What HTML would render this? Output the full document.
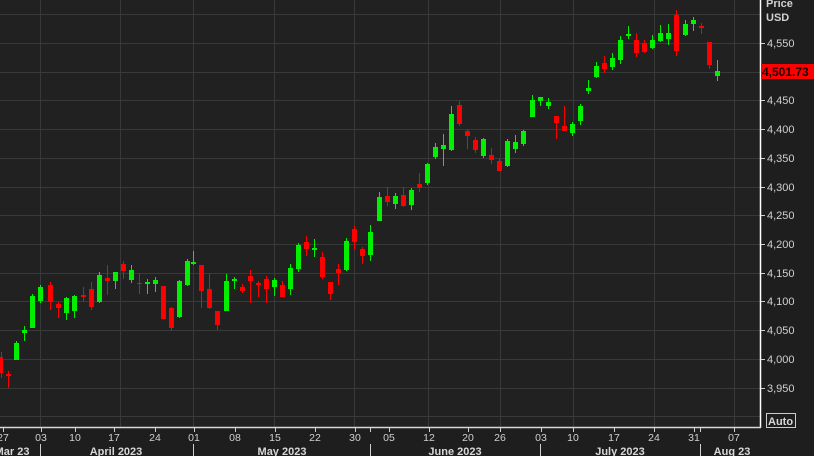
<!DOCTYPE html>
<html><head><meta charset="utf-8"><style>
html,body{margin:0;padding:0;background:#1e1e1f;}
svg{display:block}
text{font-family:"Liberation Sans",sans-serif;}
</style></head><body>
<svg width="814" height="456" viewBox="0 0 814 456" xmlns="http://www.w3.org/2000/svg">
<rect width="814" height="456" fill="#1e1e1f"/>
<rect x="0" y="0" width="760" height="427" fill="#202120"/>
<g stroke="#383a39" stroke-width="1">
<line x1="0" y1="14.5" x2="760" y2="14.5"/><line x1="0" y1="43.5" x2="760" y2="43.5"/><line x1="0" y1="72.5" x2="760" y2="72.5"/><line x1="0" y1="100.5" x2="760" y2="100.5"/><line x1="0" y1="129.5" x2="760" y2="129.5"/><line x1="0" y1="158.5" x2="760" y2="158.5"/><line x1="0" y1="187.5" x2="760" y2="187.5"/><line x1="0" y1="215.5" x2="760" y2="215.5"/><line x1="0" y1="244.5" x2="760" y2="244.5"/><line x1="0" y1="273.5" x2="760" y2="273.5"/><line x1="0" y1="301.5" x2="760" y2="301.5"/><line x1="0" y1="330.5" x2="760" y2="330.5"/><line x1="0" y1="359.5" x2="760" y2="359.5"/><line x1="0" y1="388.5" x2="760" y2="388.5"/><line x1="0" y1="416.5" x2="760" y2="416.5"/>
<line x1="40.5" y1="0" x2="40.5" y2="427"/><line x1="120.5" y1="0" x2="120.5" y2="427"/><line x1="193.5" y1="0" x2="193.5" y2="427"/><line x1="274.5" y1="0" x2="274.5" y2="427"/><line x1="354.5" y1="0" x2="354.5" y2="427"/><line x1="428.5" y1="0" x2="428.5" y2="427"/><line x1="500.5" y1="0" x2="500.5" y2="427"/><line x1="573.5" y1="0" x2="573.5" y2="427"/><line x1="654.5" y1="0" x2="654.5" y2="427"/><line x1="734.5" y1="0" x2="734.5" y2="427"/>
</g>
<g stroke-width="1">
<g fill="#ff0000" stroke="#ff0000">
<line x1="1.5" y1="352" x2="1.5" y2="378"/><rect x="-1" y="357" width="4" height="16" stroke="none"/>
<line x1="8.5" y1="371" x2="8.5" y2="388"/><rect x="6" y="374" width="5" height="2" stroke="none"/>
<line x1="50.5" y1="282" x2="50.5" y2="310"/><rect x="48" y="285" width="5" height="17" stroke="none"/>
<line x1="58.5" y1="302" x2="58.5" y2="318"/><rect x="56" y="304" width="5" height="4" stroke="none"/>
<line x1="83.5" y1="287" x2="83.5" y2="302"/><rect x="81" y="295" width="5" height="2" stroke="none"/>
<line x1="91.5" y1="282" x2="91.5" y2="310"/><rect x="89" y="289" width="5" height="18" stroke="none"/>
<line x1="107.5" y1="265" x2="107.5" y2="295"/><rect x="105" y="278" width="5" height="3" stroke="none"/>
<line x1="123.5" y1="261" x2="123.5" y2="279"/><rect x="121" y="264" width="5" height="7" stroke="none"/>
<line x1="139.5" y1="273" x2="139.5" y2="294"/><rect x="137" y="283" width="5" height="1" stroke="none"/>
<line x1="163.5" y1="286" x2="163.5" y2="319"/><rect x="161" y="286" width="5" height="33" stroke="none"/>
<line x1="171.5" y1="307" x2="171.5" y2="331"/><rect x="169" y="308" width="5" height="20" stroke="none"/>
<line x1="201.5" y1="265" x2="201.5" y2="308"/><rect x="199" y="265" width="5" height="26" stroke="none"/>
<line x1="209.5" y1="273" x2="209.5" y2="309"/><rect x="207" y="289" width="5" height="19" stroke="none"/>
<line x1="217.5" y1="311" x2="217.5" y2="330"/><rect x="215" y="311" width="5" height="14" stroke="none"/>
<line x1="242.5" y1="284" x2="242.5" y2="293"/><rect x="240" y="287" width="5" height="4" stroke="none"/>
<line x1="250.5" y1="270" x2="250.5" y2="303"/><rect x="248" y="276" width="5" height="5" stroke="none"/>
<line x1="258.5" y1="281" x2="258.5" y2="297"/><rect x="256" y="283" width="5" height="2" stroke="none"/>
<line x1="266.5" y1="276" x2="266.5" y2="303"/><rect x="264" y="279" width="5" height="10" stroke="none"/>
<line x1="282.5" y1="281" x2="282.5" y2="297"/><rect x="280" y="285" width="5" height="12" stroke="none"/>
<line x1="306.5" y1="236" x2="306.5" y2="256"/><rect x="304" y="242" width="5" height="7" stroke="none"/>
<line x1="322.5" y1="252" x2="322.5" y2="279"/><rect x="320" y="257" width="5" height="20" stroke="none"/>
<line x1="330.5" y1="282" x2="330.5" y2="300"/><rect x="328" y="282" width="5" height="12" stroke="none"/>
<line x1="338.5" y1="264" x2="338.5" y2="285"/><rect x="336" y="269" width="5" height="4" stroke="none"/>
<line x1="354.5" y1="226" x2="354.5" y2="249"/><rect x="352" y="229" width="5" height="13" stroke="none"/>
<line x1="362.5" y1="247" x2="362.5" y2="264"/><rect x="360" y="249" width="5" height="7" stroke="none"/>
<line x1="387.5" y1="187" x2="387.5" y2="206"/><rect x="385" y="196" width="5" height="6" stroke="none"/>
<line x1="403.5" y1="187" x2="403.5" y2="207"/><rect x="401" y="195" width="5" height="11" stroke="none"/>
<line x1="419.5" y1="173" x2="419.5" y2="192"/><rect x="417" y="184" width="5" height="4" stroke="none"/>
<line x1="459.5" y1="101" x2="459.5" y2="126"/><rect x="457" y="105" width="5" height="19" stroke="none"/>
<line x1="467.5" y1="129" x2="467.5" y2="149"/><rect x="465" y="131" width="5" height="5" stroke="none"/>
<line x1="475.5" y1="137" x2="475.5" y2="153"/><rect x="473" y="140" width="5" height="10" stroke="none"/>
<line x1="491.5" y1="148" x2="491.5" y2="164"/><rect x="489" y="155" width="5" height="5" stroke="none"/>
<line x1="499.5" y1="158" x2="499.5" y2="171"/><rect x="497" y="161" width="5" height="10" stroke="none"/>
<line x1="556.5" y1="116" x2="556.5" y2="139"/><rect x="554" y="116" width="5" height="7" stroke="none"/>
<line x1="564.5" y1="106" x2="564.5" y2="131"/><rect x="562" y="126" width="5" height="5" stroke="none"/>
<line x1="604.5" y1="56" x2="604.5" y2="73"/><rect x="602" y="63" width="5" height="6" stroke="none"/>
<line x1="636.5" y1="33" x2="636.5" y2="57"/><rect x="634" y="40" width="5" height="13" stroke="none"/>
<line x1="644.5" y1="40" x2="644.5" y2="53"/><rect x="642" y="43" width="5" height="9" stroke="none"/>
<line x1="676.5" y1="10" x2="676.5" y2="56"/><rect x="674" y="15" width="5" height="36" stroke="none"/>
<line x1="701.5" y1="23" x2="701.5" y2="34"/><rect x="699" y="26" width="5" height="2" stroke="none"/>
<line x1="709.5" y1="42" x2="709.5" y2="69"/><rect x="707" y="42" width="5" height="23" stroke="none"/>
</g>
<g fill="#00f000" stroke="#00f000">
<line x1="16.5" y1="341" x2="16.5" y2="360"/><rect x="14" y="343" width="5" height="17" stroke="none"/>
<line x1="24.5" y1="326" x2="24.5" y2="341"/><rect x="22" y="330" width="5" height="3" stroke="none"/>
<line x1="32.5" y1="294" x2="32.5" y2="328"/><rect x="30" y="296" width="5" height="32" stroke="none"/>
<line x1="40.5" y1="285" x2="40.5" y2="303"/><rect x="38" y="287" width="5" height="14" stroke="none"/>
<line x1="66.5" y1="297" x2="66.5" y2="320"/><rect x="64" y="298" width="5" height="15" stroke="none"/>
<line x1="74.5" y1="295" x2="74.5" y2="318"/><rect x="72" y="296" width="5" height="15" stroke="none"/>
<line x1="99.5" y1="272" x2="99.5" y2="303"/><rect x="97" y="275" width="5" height="27" stroke="none"/>
<line x1="115.5" y1="272" x2="115.5" y2="289"/><rect x="113" y="272" width="5" height="9" stroke="none"/>
<line x1="131.5" y1="265" x2="131.5" y2="283"/><rect x="129" y="270" width="5" height="10" stroke="none"/>
<line x1="147.5" y1="279" x2="147.5" y2="294"/><rect x="145" y="282" width="5" height="2" stroke="none"/>
<line x1="155.5" y1="277" x2="155.5" y2="292"/><rect x="153" y="280" width="5" height="4" stroke="none"/>
<line x1="179.5" y1="280" x2="179.5" y2="318"/><rect x="177" y="281" width="5" height="36" stroke="none"/>
<line x1="187.5" y1="259" x2="187.5" y2="286"/><rect x="185" y="261" width="5" height="24" stroke="none"/>
<line x1="193.5" y1="251" x2="193.5" y2="265"/><rect x="191" y="262" width="5" height="2" stroke="none"/>
<line x1="226.5" y1="274" x2="226.5" y2="311"/><rect x="224" y="281" width="5" height="30" stroke="none"/>
<line x1="234.5" y1="277" x2="234.5" y2="289"/><rect x="232" y="279" width="5" height="2" stroke="none"/>
<line x1="274.5" y1="278" x2="274.5" y2="296"/><rect x="272" y="280" width="5" height="7" stroke="none"/>
<line x1="290.5" y1="264" x2="290.5" y2="295"/><rect x="288" y="268" width="5" height="21" stroke="none"/>
<line x1="298.5" y1="243" x2="298.5" y2="272"/><rect x="296" y="245" width="5" height="24" stroke="none"/>
<line x1="314.5" y1="239" x2="314.5" y2="257"/><rect x="312" y="248" width="5" height="2" stroke="none"/>
<line x1="346.5" y1="238" x2="346.5" y2="271"/><rect x="344" y="241" width="5" height="29" stroke="none"/>
<line x1="370.5" y1="225" x2="370.5" y2="261"/><rect x="368" y="232" width="5" height="23" stroke="none"/>
<line x1="379.5" y1="192" x2="379.5" y2="221"/><rect x="377" y="197" width="5" height="24" stroke="none"/>
<line x1="395.5" y1="193" x2="395.5" y2="209"/><rect x="393" y="196" width="5" height="8" stroke="none"/>
<line x1="411.5" y1="188" x2="411.5" y2="210"/><rect x="409" y="190" width="5" height="15" stroke="none"/>
<line x1="427.5" y1="163" x2="427.5" y2="185"/><rect x="425" y="164" width="5" height="19" stroke="none"/>
<line x1="435.5" y1="143" x2="435.5" y2="159"/><rect x="433" y="147" width="5" height="10" stroke="none"/>
<line x1="443.5" y1="134" x2="443.5" y2="166"/><rect x="441" y="145" width="5" height="4" stroke="none"/>
<line x1="451.5" y1="106" x2="451.5" y2="151"/><rect x="449" y="114" width="5" height="36" stroke="none"/>
<line x1="483.5" y1="138" x2="483.5" y2="158"/><rect x="481" y="139" width="5" height="17" stroke="none"/>
<line x1="507.5" y1="139" x2="507.5" y2="167"/><rect x="505" y="141" width="5" height="25" stroke="none"/>
<line x1="515.5" y1="135" x2="515.5" y2="153"/><rect x="513" y="142" width="5" height="7" stroke="none"/>
<line x1="523.5" y1="130" x2="523.5" y2="146"/><rect x="521" y="131" width="5" height="13" stroke="none"/>
<line x1="532.5" y1="95" x2="532.5" y2="117"/><rect x="530" y="100" width="5" height="17" stroke="none"/>
<line x1="540.5" y1="97" x2="540.5" y2="106"/><rect x="538" y="97" width="5" height="4" stroke="none"/>
<line x1="548.5" y1="98" x2="548.5" y2="109"/><rect x="546" y="102" width="5" height="4" stroke="none"/>
<line x1="572.5" y1="122" x2="572.5" y2="136"/><rect x="570" y="124" width="5" height="9" stroke="none"/>
<line x1="580.5" y1="104" x2="580.5" y2="125"/><rect x="578" y="106" width="5" height="15" stroke="none"/>
<line x1="588.5" y1="80" x2="588.5" y2="94"/><rect x="586" y="88" width="5" height="3" stroke="none"/>
<line x1="596.5" y1="62" x2="596.5" y2="78"/><rect x="594" y="66" width="5" height="11" stroke="none"/>
<line x1="612.5" y1="53" x2="612.5" y2="70"/><rect x="610" y="58" width="5" height="9" stroke="none"/>
<line x1="620.5" y1="36" x2="620.5" y2="64"/><rect x="618" y="40" width="5" height="20" stroke="none"/>
<line x1="628.5" y1="26" x2="628.5" y2="39"/><rect x="626" y="34" width="5" height="2" stroke="none"/>
<line x1="652.5" y1="35" x2="652.5" y2="49"/><rect x="650" y="40" width="5" height="8" stroke="none"/>
<line x1="660.5" y1="25" x2="660.5" y2="42"/><rect x="658" y="33" width="5" height="8" stroke="none"/>
<line x1="668.5" y1="24" x2="668.5" y2="45"/><rect x="666" y="33" width="5" height="6" stroke="none"/>
<line x1="685.5" y1="20" x2="685.5" y2="36"/><rect x="683" y="24" width="5" height="11" stroke="none"/>
<line x1="693.5" y1="17" x2="693.5" y2="31"/><rect x="691" y="20" width="5" height="4" stroke="none"/>
<line x1="717.5" y1="60" x2="717.5" y2="81"/><rect x="715" y="71" width="5" height="5" stroke="none"/>
</g>
</g>
<line x1="760.5" y1="0" x2="760.5" y2="428" stroke="#ffffff" stroke-width="1.5"/>
<line x1="0" y1="427.5" x2="761" y2="427.5" stroke="#d8d8d8" stroke-width="1.5"/>
<g stroke="#cfcfcf">
<line x1="761" y1="43.5" x2="765" y2="43.5"/><line x1="761" y1="100.5" x2="765" y2="100.5"/><line x1="761" y1="129.5" x2="765" y2="129.5"/><line x1="761" y1="158.5" x2="765" y2="158.5"/><line x1="761" y1="187.5" x2="765" y2="187.5"/><line x1="761" y1="215.5" x2="765" y2="215.5"/><line x1="761" y1="244.5" x2="765" y2="244.5"/><line x1="761" y1="273.5" x2="765" y2="273.5"/><line x1="761" y1="301.5" x2="765" y2="301.5"/><line x1="761" y1="330.5" x2="765" y2="330.5"/><line x1="761" y1="359.5" x2="765" y2="359.5"/><line x1="761" y1="388.5" x2="765" y2="388.5"/>
<line x1="3.5" y1="428" x2="3.5" y2="432"/><line x1="41.5" y1="428" x2="41.5" y2="432"/><line x1="75.5" y1="428" x2="75.5" y2="432"/><line x1="114.5" y1="428" x2="114.5" y2="432"/><line x1="155.5" y1="428" x2="155.5" y2="432"/><line x1="194.5" y1="428" x2="194.5" y2="432"/><line x1="235.5" y1="428" x2="235.5" y2="432"/><line x1="275.5" y1="428" x2="275.5" y2="432"/><line x1="315.5" y1="428" x2="315.5" y2="432"/><line x1="355.5" y1="428" x2="355.5" y2="432"/><line x1="370.5" y1="428" x2="370.5" y2="432"/><line x1="389.5" y1="428" x2="389.5" y2="432"/><line x1="429.5" y1="428" x2="429.5" y2="432"/><line x1="468.5" y1="428" x2="468.5" y2="432"/><line x1="500.5" y1="428" x2="500.5" y2="432"/><line x1="541.5" y1="428" x2="541.5" y2="432"/><line x1="573.5" y1="428" x2="573.5" y2="432"/><line x1="614.5" y1="428" x2="614.5" y2="432"/><line x1="654.5" y1="428" x2="654.5" y2="432"/><line x1="694.5" y1="428" x2="694.5" y2="432"/><line x1="700.5" y1="428" x2="700.5" y2="432"/><line x1="734.5" y1="428" x2="734.5" y2="432"/>
<line x1="40.5" y1="444" x2="40.5" y2="456"/><line x1="193.5" y1="444" x2="193.5" y2="456"/><line x1="370.5" y1="444" x2="370.5" y2="456"/><line x1="540.5" y1="444" x2="540.5" y2="456"/><line x1="700.5" y1="444" x2="700.5" y2="456"/>
</g>
<g fill="#d0d0d0" font-size="11">
<text x="766" y="7" font-weight="bold">Price</text>
<text x="766" y="21" font-weight="bold">USD</text>
<text x="767" y="47">4,550</text><text x="767" y="104">4,450</text><text x="767" y="133">4,400</text><text x="767" y="162">4,350</text><text x="767" y="191">4,300</text><text x="767" y="219">4,250</text><text x="767" y="248">4,200</text><text x="767" y="277">4,150</text><text x="767" y="305">4,100</text><text x="767" y="334">4,050</text><text x="767" y="363">4,000</text><text x="767" y="392">3,950</text>
</g>
<rect x="761" y="64" width="53" height="15" fill="#ff0000"/>
<text x="762" y="76" font-size="12" font-weight="bold" fill="#1a0000">4,501.73</text>
<rect x="766.5" y="413.5" width="29" height="14" fill="none" stroke="#cccccc"/>
<text x="768" y="425" font-size="11" font-weight="bold" fill="#d8d8d8">Auto</text>
<g fill="#d0d0d0" font-size="10.5" text-anchor="middle">
<text x="3" y="441">27</text><text x="41" y="441">03</text><text x="75" y="441">10</text><text x="114" y="441">17</text><text x="155" y="441">24</text><text x="194" y="441">01</text><text x="235" y="441">08</text><text x="275" y="441">15</text><text x="315" y="441">22</text><text x="355" y="441">30</text><text x="389" y="441">05</text><text x="429" y="441">12</text><text x="468" y="441">20</text><text x="500" y="441">26</text><text x="541" y="441">03</text><text x="573" y="441">10</text><text x="614" y="441">17</text><text x="654" y="441">24</text><text x="694" y="441">31</text><text x="734" y="441">07</text>
</g>
<g fill="#d8d8d8" font-size="11" font-weight="bold" text-anchor="middle">
<text x="12" y="455">Mar 23</text><text x="116" y="455">April 2023</text><text x="282" y="455">May 2023</text><text x="455" y="455">June 2023</text><text x="620" y="455">July 2023</text><text x="732" y="455">Aug 23</text>
</g>
</svg>
</body></html>
